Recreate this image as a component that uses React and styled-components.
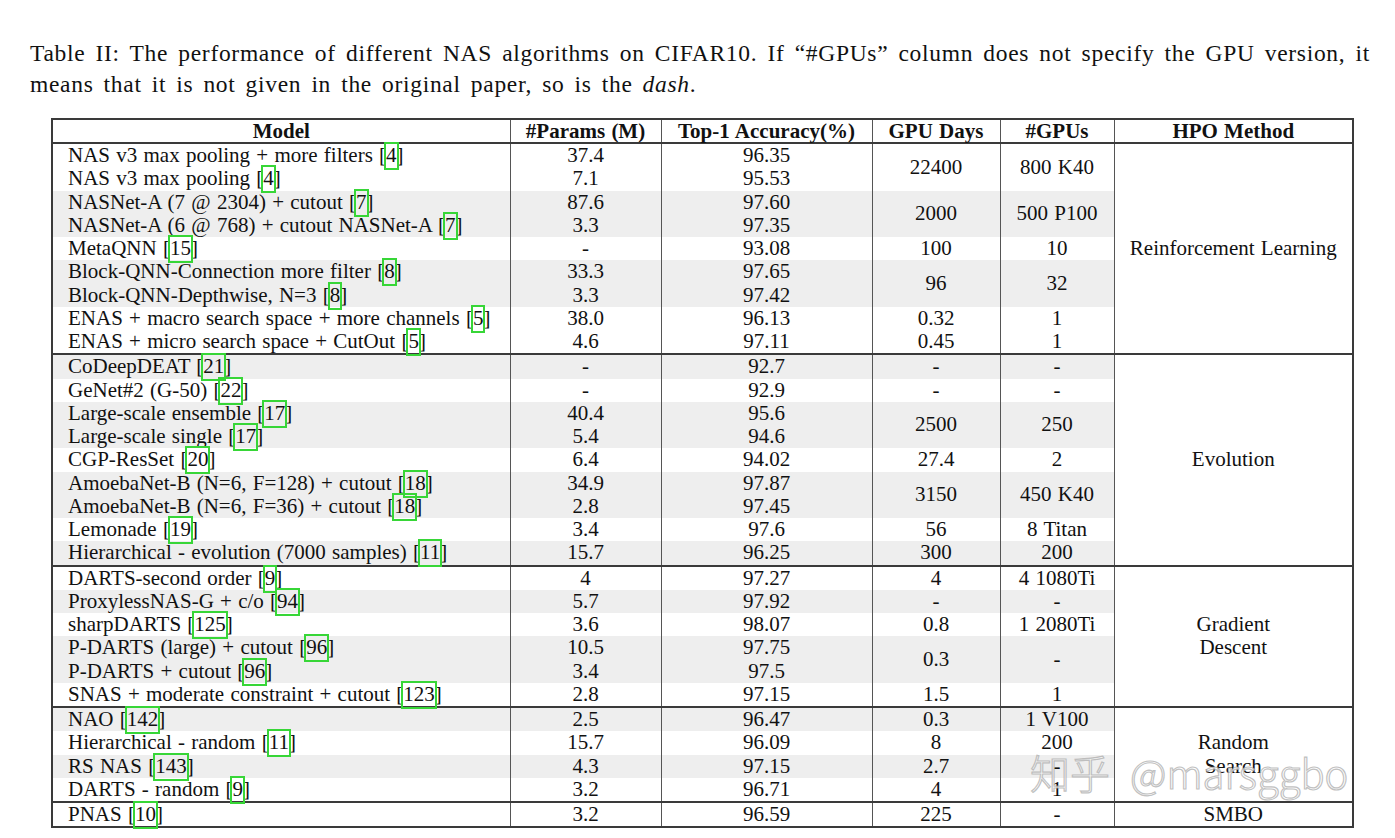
import React from "react";
import styled, { createGlobalStyle } from "styled-components";

const GlobalStyle = createGlobalStyle`
  body {
    margin: 0;
    background: #fff;
    color: #111;
    font-family: "Liberation Serif", "Times New Roman", serif;
  }
`;

const Page = styled.div`
  position: relative;
  width: 1395px;
  height: 838px;
  overflow: hidden;
  padding-top: 38px;
  box-sizing: border-box;
`;

const Caption = styled.p`
  margin: 0 0 18px 30px;
  width: 1340px;
  font-size: 23.5px;
  line-height: 31px;
  letter-spacing: 0.7px;
  word-spacing: 3.5px;
  text-align: justify;
`;

const DataTable = styled.table`
  margin-left: 51px;
  width: 1301px;
  table-layout: fixed;
  border-collapse: collapse;
  border: 2px solid #3a3a3a;
  font-size: 21px;
  word-spacing: 1px;
`;

const HeadCell = styled.th`
  height: 22px;
  padding: 0;
  line-height: 22px;
  font-weight: bold;
  text-align: center;
  border-left: 1px solid #555;
  border-bottom: 2px solid #3a3a3a;
`;

const Cell = styled.td`
  height: 23.25px;
  padding: 0 0 0 ${(p) => (p.$left ? "15px" : "0")};
  line-height: 23.25px;
  white-space: nowrap;
  text-align: ${(p) => (p.$left ? "left" : "center")};
  vertical-align: middle;
  background: ${(p) => (p.$shaded ? "#eeeeee" : "#fff")};
  border-left: 1px solid #555;
  border-top: ${(p) => (p.$first ? "2px solid #3a3a3a" : "0")};
`;

const Ref = styled.span`
  position: relative;

  &::after {
    content: "";
    position: absolute;
    top: -1px;
    bottom: -3px;
    left: -2px;
    right: -2px;
    border: 2px solid #37d637;
  }
`;

const Watermark = styled.div`
  position: absolute;
  left: 1030px;
  top: 745px;
  display: flex;
  gap: 20px;
  font-family: "Noto Sans CJK SC", "Noto Sans", sans-serif;
  font-weight: 300;
  font-size: 40px;
  line-height: 54px;
  color: rgba(255, 255, 255, 0.75);
  -webkit-text-stroke: 1.2px rgba(165, 165, 165, 0.7);
  pointer-events: none;
`;

const columns = [
  ["Model", 458],
  ["#Params (M)", 151],
  ["Top-1 Accuracy(%)", 211],
  ["GPU Days", 128],
  ["#GPUs", 114],
  ["HPO Method", 239],
];

// [model, ref, params, acc, days, gpus, shaded, span of days/gpus]
const sections = [
  {
    hpo: ["Reinforcement Learning"],
    rows: [
      ["NAS v3 max pooling + more filters", "4", "37.4", "96.35", "22400", "800 K40", false, 2],
      ["NAS v3 max pooling", "4", "7.1", "95.53", null, null, false],
      ["NASNet-A (7 @ 2304) + cutout", "7", "87.6", "97.60", "2000", "500 P100", true, 2],
      ["NASNet-A (6 @ 768) + cutout NASNet-A", "7", "3.3", "97.35", null, null, true],
      ["MetaQNN", "15", "-", "93.08", "100", "10", false],
      ["Block-QNN-Connection more filter", "8", "33.3", "97.65", "96", "32", true, 2],
      ["Block-QNN-Depthwise, N=3", "8", "3.3", "97.42", null, null, true],
      ["ENAS + macro search space + more channels", "5", "38.0", "96.13", "0.32", "1", false],
      ["ENAS + micro search space + CutOut", "5", "4.6", "97.11", "0.45", "1", false],
    ],
  },
  {
    hpo: ["Evolution"],
    rows: [
      ["CoDeepDEAT", "21", "-", "92.7", "-", "-", true],
      ["GeNet#2 (G-50)", "22", "-", "92.9", "-", "-", false],
      ["Large-scale ensemble", "17", "40.4", "95.6", "2500", "250", true, 2],
      ["Large-scale single", "17", "5.4", "94.6", null, null, true],
      ["CGP-ResSet", "20", "6.4", "94.02", "27.4", "2", false],
      ["AmoebaNet-B (N=6, F=128) + cutout", "18", "34.9", "97.87", "3150", "450 K40", true, 2],
      ["AmoebaNet-B (N=6, F=36) + cutout", "18", "2.8", "97.45", null, null, true],
      ["Lemonade", "19", "3.4", "97.6", "56", "8 Titan", false],
      ["Hierarchical - evolution (7000 samples)", "11", "15.7", "96.25", "300", "200", true],
    ],
  },
  {
    hpo: ["Gradient", "Descent"],
    rows: [
      ["DARTS-second order", "9", "4", "97.27", "4", "4 1080Ti", false],
      ["ProxylessNAS-G + c/o", "94", "5.7", "97.92", "-", "-", true],
      ["sharpDARTS", "125", "3.6", "98.07", "0.8", "1 2080Ti", false],
      ["P-DARTS (large) + cutout", "96", "10.5", "97.75", "0.3", "-", true, 2],
      ["P-DARTS + cutout", "96", "3.4", "97.5", null, null, true],
      ["SNAS + moderate constraint + cutout", "123", "2.8", "97.15", "1.5", "1", false],
    ],
  },
  {
    hpo: ["Random", "Search"],
    rows: [
      ["NAO", "142", "2.5", "96.47", "0.3", "1 V100", true],
      ["Hierarchical - random", "11", "15.7", "96.09", "8", "200", false],
      ["RS NAS", "143", "4.3", "97.15", "2.7", "-", true],
      ["DARTS - random", "9", "3.2", "96.71", "4", "1", false],
    ],
  },
  {
    hpo: ["SMBO"],
    rows: [["PNAS", "10", "3.2", "96.59", "225", "-", false]],
  },
];

const App = () => (
  <>
    <GlobalStyle />
    <Page>
      <Caption>
        Table II: The performance of different NAS algorithms on CIFAR10. If
        “#GPUs” column does not specify the GPU version, it means that it is
        not given in the original paper, so is the <i>dash</i>.
      </Caption>
      <DataTable>
        <colgroup>
          {columns.map(([name, w]) => (
            <col key={name} style={{ width: w }} />
          ))}
        </colgroup>
        <thead>
          <tr>
            {columns.map(([name]) => (
              <HeadCell key={name}>{name}</HeadCell>
            ))}
          </tr>
        </thead>
        <tbody>
          {sections.map((section) =>
            section.rows.map((row, i) => {
              const [model, ref, params, acc, days, gpus, shaded, span] = row;
              const first = i === 0;
              return (
                <tr key={model}>
                  <Cell $left $shaded={shaded} $first={first}>
                    {model} [<Ref>{ref}</Ref>]
                  </Cell>
                  <Cell $shaded={shaded} $first={first}>{params}</Cell>
                  <Cell $shaded={shaded} $first={first}>{acc}</Cell>
                  {days !== null && (
                    <Cell $shaded={shaded} $first={first} rowSpan={span || 1}>
                      {days}
                    </Cell>
                  )}
                  {gpus !== null && (
                    <Cell $shaded={shaded} $first={first} rowSpan={span || 1}>
                      {gpus}
                    </Cell>
                  )}
                  {first && (
                    <Cell $first rowSpan={section.rows.length}>
                      {section.hpo.map((line, k) => (
                        <React.Fragment key={line}>
                          {k > 0 && <br />}
                          {line}
                        </React.Fragment>
                      ))}
                    </Cell>
                  )}
                </tr>
              );
            })
          )}
        </tbody>
      </DataTable>
      <Watermark>
        <span>知乎</span>
        <span>@marsggbo</span>
      </Watermark>
    </Page>
  </>
);

export default App;
